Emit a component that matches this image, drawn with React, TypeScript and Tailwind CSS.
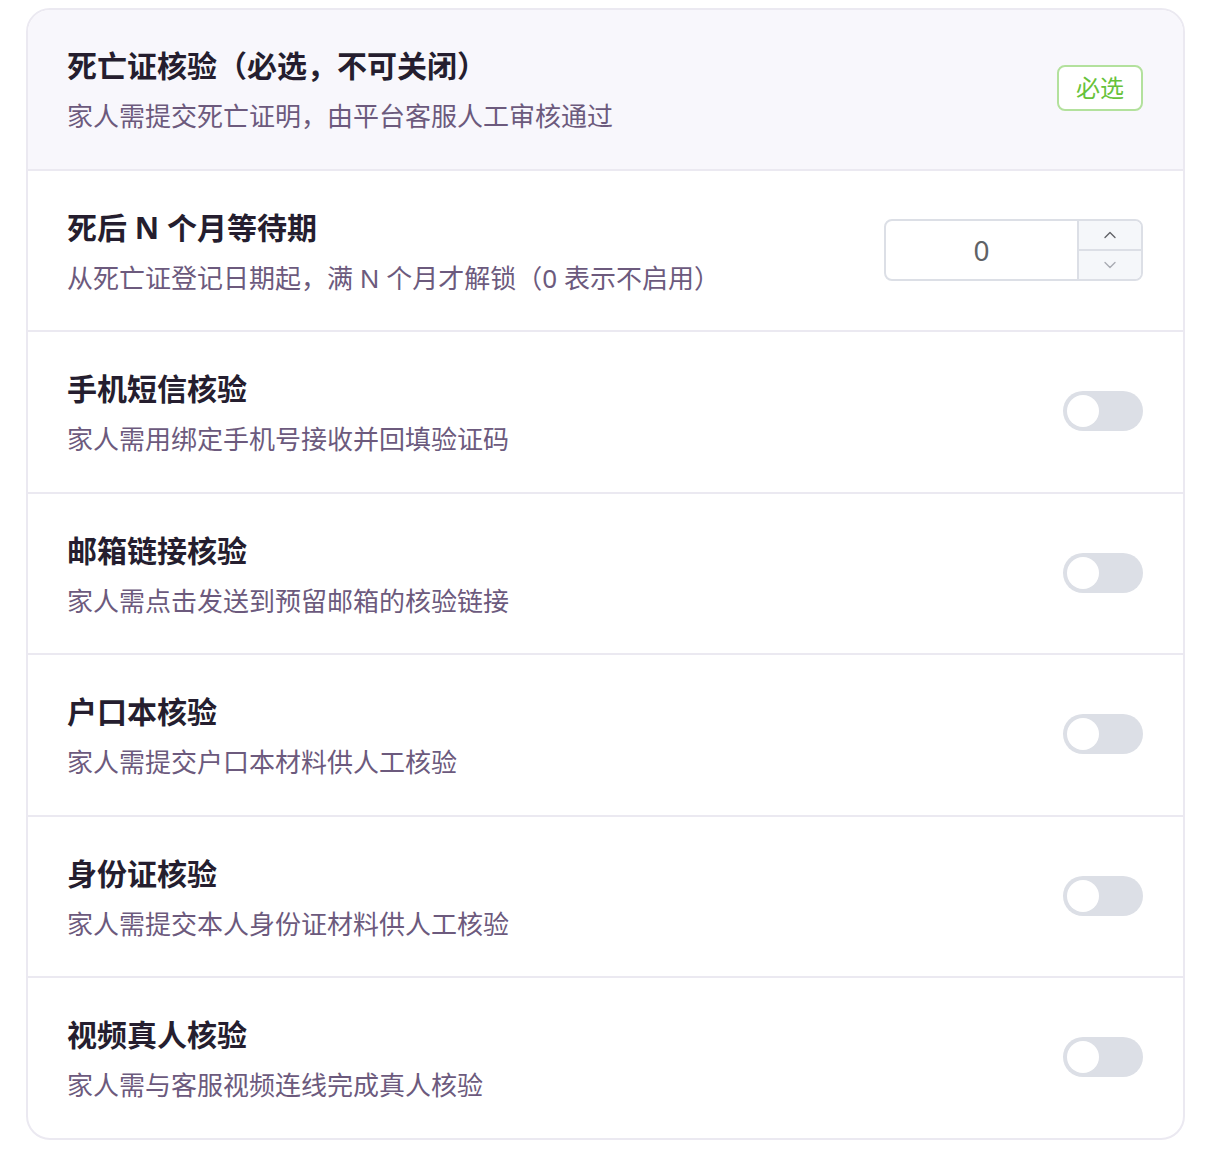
import { ChevronUp, ChevronDown } from "lucide-react";

type Row = {
  title: string;
  desc: string;
  kind: "required" | "number" | "switch";
};

const rows: Row[] = [
  { title: "死亡证核验（必选，不可关闭）", desc: "家人需提交死亡证明，由平台客服人工审核通过", kind: "required" },
  { title: "死后 N 个月等待期", desc: "从死亡证登记日期起，满 N 个月才解锁（0 表示不启用）", kind: "number" },
  { title: "手机短信核验", desc: "家人需用绑定手机号接收并回填验证码", kind: "switch" },
  { title: "邮箱链接核验", desc: "家人需点击发送到预留邮箱的核验链接", kind: "switch" },
  { title: "户口本核验", desc: "家人需提交户口本材料供人工核验", kind: "switch" },
  { title: "身份证核验", desc: "家人需提交本人身份证材料供人工核验", kind: "switch" },
  { title: "视频真人核验", desc: "家人需与客服视频连线完成真人核验", kind: "switch" },
];

function Control({ kind }: { kind: Row["kind"] }) {
  if (kind === "required") {
    return (
      <span className="flex h-[46px] w-[86px] items-center justify-center rounded-[8px] border-2 border-[#b3e19d] bg-white text-[24px] text-[#67c23a]">
        必选
      </span>
    );
  }
  if (kind === "number") {
    return (
      <div className="flex h-[62px] w-[259px] overflow-hidden rounded-[8px] border-2 border-[#dcdfe6] bg-white">
        <div className="flex flex-1 items-center justify-center text-[28px] text-[#606266]">0</div>
        <div className="flex w-[64px] flex-col border-l-2 border-[#dcdfe6] bg-[#f5f7fa]">
          <div className="flex flex-1 items-center justify-center border-b-2 border-[#dcdfe6] text-[#606266]">
            <ChevronUp className="h-[20px] w-[20px]" strokeWidth={1.6} />
          </div>
          <div className="flex flex-1 items-center justify-center text-[#a8abb2]">
            <ChevronDown className="h-[20px] w-[20px]" strokeWidth={1.6} />
          </div>
        </div>
      </div>
    );
  }
  return (
    <div className="flex h-[40px] w-[80px] items-center rounded-full bg-[#dcdfe6] px-[4px]">
      <span className="h-[32px] w-[32px] rounded-full bg-white" />
    </div>
  );
}

export default function App() {
  return (
    <div
      className="min-h-[1174px] bg-white pl-[26px] pt-[8px]"
      style={{ fontFamily: '"Noto Sans", "Noto Sans CJK SC", sans-serif' }}
    >
      <div className="w-[1159px] overflow-hidden rounded-[24px] border-2 border-[#ebe9f1] bg-white">
        {rows.map((row, i) => (
          <div
            key={row.title}
            className={`flex items-center justify-between pl-[39px] pr-[40px] pb-[34.5px] ${
              i > 0 ? "border-t-2 border-[#ebe9f1] pt-[37px]" : "pt-[36px]"
            } ${row.kind === "required" ? "bg-[#f8f7fc]" : ""}`}
          >
            <div>
              <div className="text-[30px] font-bold leading-[40px] text-[#251e2f]">{row.title}</div>
              <div className="mt-[12px] text-[26px] leading-[36px] text-[#6c5a7d]">{row.desc}</div>
            </div>
            <div className="mb-[4px]">
              <Control kind={row.kind} />
            </div>
          </div>
        ))}
      </div>
    </div>
  );
}
